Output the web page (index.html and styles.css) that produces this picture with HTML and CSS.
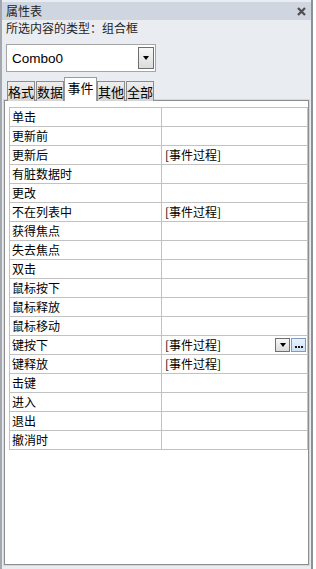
FILE: index.html
```html
<!DOCTYPE html>
<html lang="zh">
<head>
<meta charset="UTF-8" />
<title>属性表</title>
<link rel="stylesheet" href="styles.css">
</head>
<body>

<div class="sheet">
  <div class="titlebar">
    <span>属性表</span>
    <svg class="close" width="9" height="9" viewBox="0 0 9 9">
      <path d="M1 1 L8 8 M8 1 L1 8" stroke="#4d4d4d" stroke-width="2.2" />
    </svg>
  </div>
  <div class="type-label">所选内容的类型：组合框</div>

  <div class="combo">
    <span class="combo-text">Combo0</span>
    <span class="combo-btn"><i class="tri"></i></span>
  </div>

  <div class="tabs">
    <div class="tab">格式</div>
    <div class="tab">数据</div>
    <div class="tab active">事件</div>
    <div class="tab">其他</div>
    <div class="tab">全部</div>
  </div>

  <div class="panel">
    <table class="props">
      <tr><td>单击</td><td></td></tr>
      <tr><td>更新前</td><td></td></tr>
      <tr><td>更新后</td><td>[事件过程]</td></tr>
      <tr><td>有脏数据时</td><td></td></tr>
      <tr><td>更改</td><td></td></tr>
      <tr><td>不在列表中</td><td>[事件过程]</td></tr>
      <tr><td>获得焦点</td><td></td></tr>
      <tr><td>失去焦点</td><td></td></tr>
      <tr><td>双击</td><td></td></tr>
      <tr><td>鼠标按下</td><td></td></tr>
      <tr><td>鼠标释放</td><td></td></tr>
      <tr><td>鼠标移动</td><td></td></tr>
      <tr>
        <td>键按下</td>
        <td>
          <div class="cell-edit">
            <span>[事件过程]</span>
            <span class="cell-btns">
              <span class="mini-btn"><i class="tri"></i></span>
              <span class="mini-btn dots">
                <svg width="8" height="2" viewBox="0 0 8 2">
                  <rect x="0" y="0" width="2" height="2" fill="#1a1a1a" />
                  <rect x="3" y="0" width="2" height="2" fill="#1a1a1a" />
                  <rect x="6" y="0" width="2" height="2" fill="#1a1a1a" />
                </svg>
              </span>
            </span>
          </div>
        </td>
      </tr>
      <tr><td>键释放</td><td>[事件过程]</td></tr>
      <tr><td>击键</td><td></td></tr>
      <tr><td>进入</td><td></td></tr>
      <tr><td>退出</td><td></td></tr>
      <tr><td>撤消时</td><td></td></tr>
    </table>
  </div>
</div>

</body>
</html>
```

FILE: styles.css
```css
body {
  margin: 0;
  background: #fff;
  font-family: "Noto Sans CJK SC", "Liberation Sans", sans-serif;
  color: #000;
}
.sheet {
  width: 313px;
  height: 569px;
  box-sizing: border-box;
  border-left: 2px solid #a3a8af;
  border-right: 2px solid #8c9097;
  background: #e9ecf1;
  display: flex;
  flex-direction: column;
}
.titlebar {
  margin-top: 2px;
  height: 18px;
  background: #d0d6df;
  display: flex;
  justify-content: space-between;
  align-items: center;
  padding: 0 5px 0 4px;
  font-size: 12px;
  line-height: 18px;
  color: #1e1e1e;
}
.close {
  display: block;
}
.type-label {
  font-size: 12px;
  line-height: 14px;
  margin: 1px 0 0 4px;
  color: #1e1e1e;
}
.combo {
  margin: 9px 0 0 4px;
  width: 150px;
  height: 28px;
  box-sizing: border-box;
  background: #fff;
  border: 1px solid #a5a5a5;
  display: flex;
  align-items: center;
  justify-content: space-between;
  padding: 0 1px 0 5px;
}
.combo-text {
  font-family: "Liberation Sans", sans-serif;
  font-size: 13.5px;
}
.combo-btn {
  width: 16px;
  height: 22px;
  box-sizing: border-box;
  border: 1px solid #6f6f6f;
  background: linear-gradient(#f7f7f7, #dcdcdc);
  display: flex;
  align-items: center;
  justify-content: center;
}
.tri {
  display: block;
  width: 0;
  height: 0;
  border-left: 3.5px solid transparent;
  border-right: 3.5px solid transparent;
  border-top: 4px solid #000;
}
.tabs {
  margin: 5px 0 0 5px;
  display: flex;
  align-items: flex-end;
  gap: 1px;
  position: relative;
  z-index: 1;
  height: 24px;
}
.tab {
  width: 28px;
  height: 20px;
  box-sizing: border-box;
  text-align: center;
  font-size: 13px;
  line-height: 19px;
  border: 1px solid #8c8c8c;
  border-bottom: none;
  background: linear-gradient(#eeeeee, #d5d5d5);
  white-space: nowrap;
}
.tab.active {
  width: 33px;
  height: 24px;
  margin: 0 -1px;
  line-height: 20px;
  background: #fff;
  border-color: #9a9a9a;
}
.panel {
  flex: 1;
  margin: -1px 2px 4px 2px;
  background: #fff;
  border: 1px solid #8e8e8e;
  box-shadow: 0 0 0 1px #d4d7dc;
  padding: 6px 1px 0 4px;
}
.props {
  width: 299px;
  border-collapse: collapse;
  table-layout: fixed;
  font-size: 12px;
}
.props td {
  height: 18px;
  padding: 0 0 0 2px;
  border: 1px solid #c2c2c2;
  line-height: 18px;
  white-space: nowrap;
}
.props td:first-child {
  width: 149px;
}
.props td:last-child {
  padding-left: 3px;
}
.cell-edit {
  display: flex;
  justify-content: space-between;
  align-items: center;
}
.cell-btns {
  display: flex;
  gap: 1px;
  margin-right: 1px;
}
.mini-btn {
  width: 15px;
  height: 14px;
  box-sizing: border-box;
  border: 1px solid #707070;
  background: linear-gradient(#f7f7f7, #dcdcdc);
  display: flex;
  align-items: center;
  justify-content: center;
}
.mini-btn.dots {
  border-color: #7d9cc0;
  background: linear-gradient(#e8f2fc, #cfe3f7);
}
.mini-btn svg {
  display: block;
  margin-top: 3px;
}
```
